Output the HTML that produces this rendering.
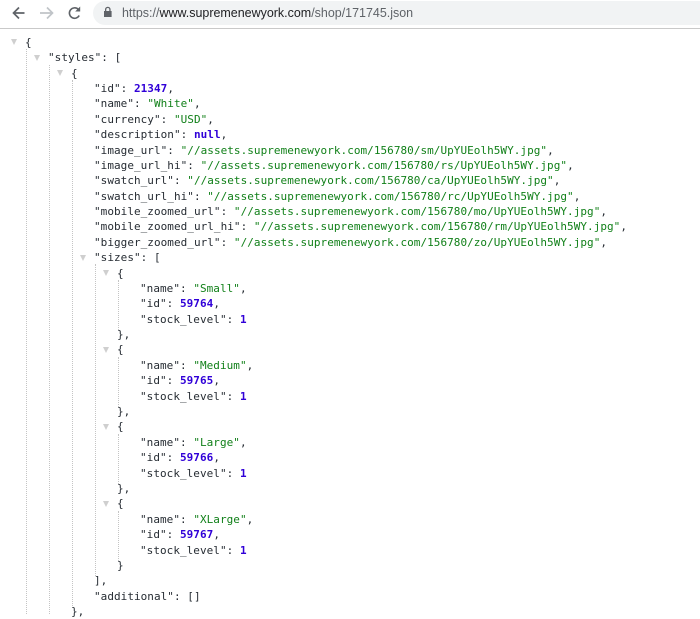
<!DOCTYPE html>
<html><head><meta charset="utf-8">
<style>
html,body{margin:0;padding:0;background:#fff;width:700px;height:614px;overflow:hidden}
#bar{position:absolute;left:0;top:0;width:700px;height:28px;background:#fff;border-bottom:1px solid #c9c9c9;filter:blur(.25px)}
#pill{position:absolute;left:93px;top:1px;width:640px;height:24px;border-radius:12px;background:#f1f3f4}
#url{position:absolute;left:122px;top:5px;font:12.47px/16px "Liberation Sans",sans-serif;color:#5f6368;white-space:pre}
#url b{font-weight:normal;color:#202124}
svg.i{position:absolute;left:0;top:0}
#guides{position:absolute;left:0;top:0;width:700px;height:614px}
#code{position:absolute;left:0;top:0;width:700px;height:614px;filter:blur(.3px)}
.l{position:absolute;font:11px/15px "DejaVu Sans Mono","Liberation Mono",monospace;letter-spacing:.04px;color:#262c33;white-space:pre}
.s{color:#118019}.n{color:#3000d8;font-weight:bold}
.g{position:absolute;width:0;border-left:1px dotted #c4c4c4}
.t{position:absolute;width:0;height:0;border-left:3.5px solid transparent;border-right:3.5px solid transparent;border-top:6.500px solid #cfcfcf}
</style></head><body>
<div id="bar"><div id="pill"></div>
<svg class="i" width="100" height="28" fill="none">
<path d="M24.500 13H14M19 7.500L13.500 13L19 18.500" stroke="#5f6368" stroke-width="1.700"/>
<path d="M40 13H52M47 7.500L52.500 13L47 18.500" stroke="#c0c4c8" stroke-width="1.700"/>
<path d="M79.200 15.500A5.200 5.200 0 1 1 78.200 9.300" stroke="#5f6368" stroke-width="1.600"/>
<path d="M80.200 6.500V11.500H75.200Z" fill="#5f6368"/>
</svg>
<svg class="i" width="120" height="28"><path d="M105 11V9.500a2.800 2.800 0 0 1 5.600 0V11h1v6h-7.600v-6zM106.300 11h3V9.500a1.500 1.500 0 0 0-3 0z" fill="#5f6368" fill-rule="evenodd"/></svg>
<div id="url">https://<b>www.supremenewyork.com</b>/shop/171745.json</div>
</div>
<div id="guides">
<div class="g" style="left:26px;top:49px;height:565px"></div>
<div class="g" style="left:49px;top:65px;height:549px"></div>
<div class="g" style="left:72px;top:80px;height:526px"></div>
<div class="g" style="left:95px;top:264px;height:312px"></div>
<div class="g" style="left:118px;top:280px;height:50px"></div>
<div class="g" style="left:118px;top:357px;height:50px"></div>
<div class="g" style="left:118px;top:434px;height:50px"></div>
<div class="g" style="left:118px;top:511px;height:50px"></div>
<div class="t" style="left:11px;top:39px"></div>
<div class="t" style="left:34px;top:55px"></div>
<div class="t" style="left:57px;top:70px"></div>
<div class="t" style="left:80px;top:255px"></div>
<div class="t" style="left:103px;top:270px"></div>
<div class="t" style="left:103px;top:347px"></div>
<div class="t" style="left:103px;top:424px"></div>
<div class="t" style="left:103px;top:501px"></div>
</div>
<div id="code">
<div class="l" style="left:25px;top:35px">{</div>
<div class="l" style="left:48px;top:50px">"styles": [</div>
<div class="l" style="left:71px;top:66px">{</div>
<div class="l" style="left:94px;top:81px">"id": <span class="n">21347</span>,</div>
<div class="l" style="left:94px;top:96px">"name": <span class="s">"White"</span>,</div>
<div class="l" style="left:94px;top:112px">"currency": <span class="s">"USD"</span>,</div>
<div class="l" style="left:94px;top:127px">"description": <span class="n">null</span>,</div>
<div class="l" style="left:94px;top:143px">"image_url": <span class="s">"//assets.supremenewyork.com/156780/sm/UpYUEolh5WY.jpg"</span>,</div>
<div class="l" style="left:94px;top:158px">"image_url_hi": <span class="s">"//assets.supremenewyork.com/156780/rs/UpYUEolh5WY.jpg"</span>,</div>
<div class="l" style="left:94px;top:173px">"swatch_url": <span class="s">"//assets.supremenewyork.com/156780/ca/UpYUEolh5WY.jpg"</span>,</div>
<div class="l" style="left:94px;top:189px">"swatch_url_hi": <span class="s">"//assets.supremenewyork.com/156780/rc/UpYUEolh5WY.jpg"</span>,</div>
<div class="l" style="left:94px;top:204px">"mobile_zoomed_url": <span class="s">"//assets.supremenewyork.com/156780/mo/UpYUEolh5WY.jpg"</span>,</div>
<div class="l" style="left:94px;top:219px">"mobile_zoomed_url_hi": <span class="s">"//assets.supremenewyork.com/156780/rm/UpYUEolh5WY.jpg"</span>,</div>
<div class="l" style="left:94px;top:235px">"bigger_zoomed_url": <span class="s">"//assets.supremenewyork.com/156780/zo/UpYUEolh5WY.jpg"</span>,</div>
<div class="l" style="left:94px;top:250px">"sizes": [</div>
<div class="l" style="left:117px;top:266px">{</div>
<div class="l" style="left:140px;top:281px">"name": <span class="s">"Small"</span>,</div>
<div class="l" style="left:140px;top:296px">"id": <span class="n">59764</span>,</div>
<div class="l" style="left:140px;top:312px">"stock_level": <span class="n">1</span></div>
<div class="l" style="left:117px;top:327px">},</div>
<div class="l" style="left:117px;top:342px">{</div>
<div class="l" style="left:140px;top:358px">"name": <span class="s">"Medium"</span>,</div>
<div class="l" style="left:140px;top:373px">"id": <span class="n">59765</span>,</div>
<div class="l" style="left:140px;top:389px">"stock_level": <span class="n">1</span></div>
<div class="l" style="left:117px;top:404px">},</div>
<div class="l" style="left:117px;top:419px">{</div>
<div class="l" style="left:140px;top:435px">"name": <span class="s">"Large"</span>,</div>
<div class="l" style="left:140px;top:450px">"id": <span class="n">59766</span>,</div>
<div class="l" style="left:140px;top:466px">"stock_level": <span class="n">1</span></div>
<div class="l" style="left:117px;top:481px">},</div>
<div class="l" style="left:117px;top:496px">{</div>
<div class="l" style="left:140px;top:512px">"name": <span class="s">"XLarge"</span>,</div>
<div class="l" style="left:140px;top:527px">"id": <span class="n">59767</span>,</div>
<div class="l" style="left:140px;top:543px">"stock_level": <span class="n">1</span></div>
<div class="l" style="left:117px;top:558px">}</div>
<div class="l" style="left:94px;top:573px">],</div>
<div class="l" style="left:94px;top:589px">"additional": []</div>
<div class="l" style="left:71px;top:604px">},</div>
</div>
</body></html>
